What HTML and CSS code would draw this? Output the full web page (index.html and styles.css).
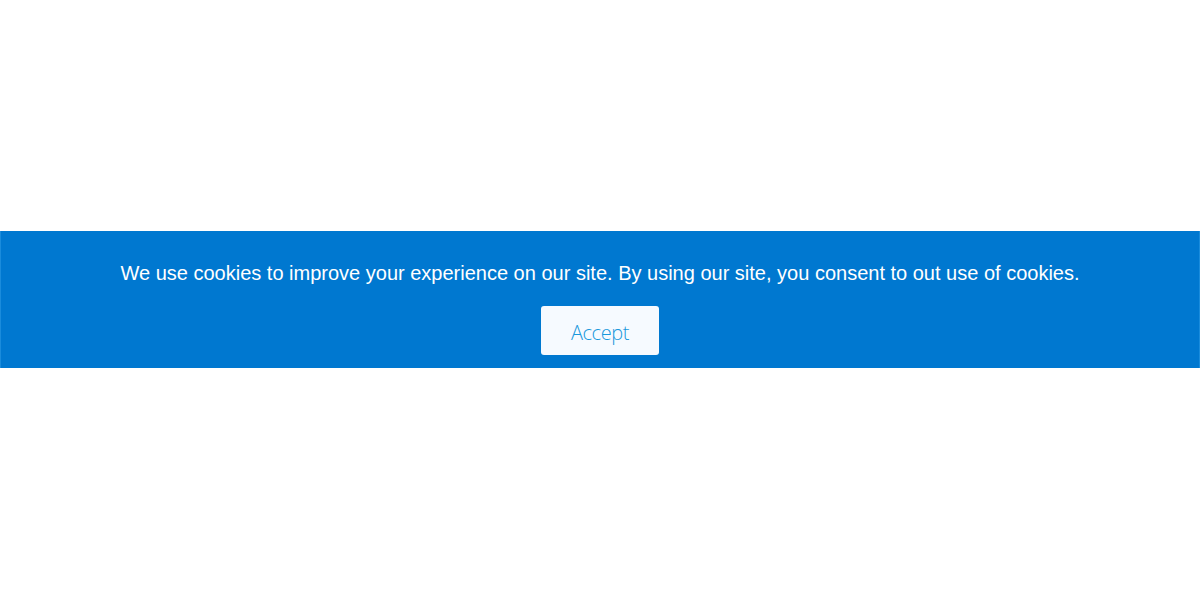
FILE: index.html
```html
<!DOCTYPE html>
<html lang="en">
<head>
<meta charset="utf-8">
<title>Cookie consent</title>
<link rel="stylesheet" href="styles.css">
</head>
<body>
<div class="page">
  <div class="banner">
    <p class="message">We use cookies to improve your experience on our site. By using our site, you consent to out use of cookies.</p>
    <button class="accept" type="button">Accept</button>
  </div>
</div>
</body>
</html>
```
FILE: styles.css
```css
html, body {
  margin: 0;
  padding: 0;
  background: #ffffff;
}
.page {
  height: 600px;
  display: flex;
  flex-direction: column;
  justify-content: center;
}
.banner {
  box-sizing: border-box;
  height: 137px;
  margin-top: -1px;
  background: #0078d0;
  border-left: 1px solid #1a8cdc;
  border-right: 1px solid #1a8cdc;
  display: flex;
  flex-direction: column;
  align-items: center;
  padding-top: 30px;
}
.message {
  margin: 0;
  font-family: "Liberation Sans", Arial, sans-serif;
  font-size: 20px;
  line-height: 24px;
  color: #ffffff;
}
.accept {
  margin-top: 21px;
  width: 118px;
  height: 49px;
  border: none;
  border-radius: 3px;
  background: #f6faff;
  color: #1898dc;
  font-family: "Open Sans", "Noto Sans", sans-serif;
  font-size: 20px;
  font-weight: 300;
  letter-spacing: -0.4px;
  padding: 3px 0 0 0;
  cursor: pointer;
}
```
